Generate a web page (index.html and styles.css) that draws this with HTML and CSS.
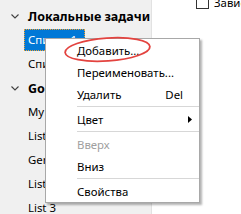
FILE: index.html
```html
<!DOCTYPE html>
<html lang="ru">
<head>
<meta charset="utf-8">
<link rel="stylesheet" href="styles.css">
</head>
<body>
<div class="app">
  <div class="tree">
    <div class="row group">
      <svg class="chev" width="8" height="5" viewBox="0 0 8 5"><path d="M0.5 0.5 L4 4 L7.5 0.5" fill="none" stroke="#404040" stroke-width="1.1"/></svg>
      <span class="label">Локальные задачи</span>
    </div>
    <div class="row child"><span class="label sel">Список 1</span></div>
    <div class="row child"><span class="label">Список 2</span></div>
    <div class="row group">
      <svg class="chev" width="8" height="5" viewBox="0 0 8 5"><path d="M0.5 0.5 L4 4 L7.5 0.5" fill="none" stroke="#404040" stroke-width="1.1"/></svg>
      <span class="label">Google Tasks</span>
    </div>
    <div class="row child"><span class="label">My Tasks</span></div>
    <div class="row child"><span class="label">List 1</span></div>
    <div class="row child"><span class="label">General</span></div>
    <div class="row child"><span class="label">List 2</span></div>
    <div class="row child"><span class="label">List 3</span></div>
  </div>
  <div class="main">
    <div class="check-row">
      <span class="box"></span>
      <span class="check-text">Зависит</span>
    </div>
  </div>

  <div class="menu">
    <div class="item">Добавить...</div>
    <div class="item">Переименовать...</div>
    <div class="item"><span>Удалить</span><span class="key">Del</span></div>
    <div class="sep"></div>
    <div class="item"><span>Цвет</span><svg class="arrow" width="4" height="7" viewBox="0 0 4 7"><path d="M0 0 L4 3.5 L0 7 Z" fill="#000"/></svg></div>
    <div class="sep"></div>
    <div class="item disabled">Вверх</div>
    <div class="item">Вниз</div>
    <div class="sep"></div>
    <div class="item">Свойства</div>
  </div>

  <svg class="mark" width="241" height="214" viewBox="0 0 241 214">
    <ellipse cx="107.5" cy="49.5" rx="42.5" ry="11.5" transform="rotate(-4 107.5 49.5)" fill="none" stroke="#e3433f" stroke-width="1.8"/>
  </svg>
</div>
</body>
</html>
```
FILE: styles.css
```css
html, body {
  margin: 0;
  padding: 0;
}
body {
  width: 241px;
  height: 214px;
  overflow: hidden;
  font-family: "Noto Sans", "Open Sans", sans-serif;
  font-size: 11.4px;
  color: #000;
  background: #fff;
}
.app {
  position: relative;
  display: flex;
  width: 241px;
  height: 214px;
  overflow: hidden;
}
.tree {
  width: 152px;
  flex: none;
  background: #f0f0f0;
  border-right: 1px solid #e2e2e2;
  padding-top: 4px;
  box-sizing: border-box;
}
.row {
  height: 24px;
  display: flex;
  align-items: center;
  white-space: nowrap;
}
.group {
  padding-left: 11px;
}
.group .label {
  font-weight: bold;
  font-size: 12.5px;
  margin-left: 9px;
}
.child {
  padding-left: 24px;
}
.child .label {
  padding: 0 4px;
  height: 22px;
  line-height: 22px;
  box-sizing: border-box;
}
.label.sel {
  background: #0078d7;
  color: #fff;
  width: 61px;
  overflow: hidden;
  outline: 1px dotted #f0a030;
  outline-offset: -1px;
}
.chev {
  display: block;
  flex: none;
}
.main {
  flex: 1;
  background: #fff;
  overflow: hidden;
}
.check-row {
  display: flex;
  align-items: center;
  margin-top: -8px;
  margin-left: 44px;
  height: 20px;
  white-space: nowrap;
}
.box {
  width: 13px;
  height: 13px;
  box-sizing: border-box;
  border: 1px solid #333;
  background: #fff;
  flex: none;
}
.check-text {
  margin-left: 5px;
}
.menu {
  position: absolute;
  left: 45px;
  top: 38px;
  width: 155px;
  box-sizing: border-box;
  background: #fff;
  border: 1px solid #a8a8a8;
  box-shadow: 2px 2px 2px rgba(0,0,0,0.3);
}
.item {
  height: 22px;
  display: flex;
  align-items: center;
  justify-content: space-between;
  padding-left: 31px;
  padding-right: 16px;
  white-space: nowrap;
}
.item .arrow {
  margin-right: -9px;
}
.item.disabled {
  color: #a0a0a0;
}
.sep {
  height: 3px;
  display: flex;
  align-items: center;
  padding-left: 31px;
}
.sep::after {
  content: "";
  display: block;
  height: 1px;
  flex: 1;
  background: #d7d7d7;
}
.mark {
  position: absolute;
  left: 0;
  top: 0;
  pointer-events: none;
}
```
